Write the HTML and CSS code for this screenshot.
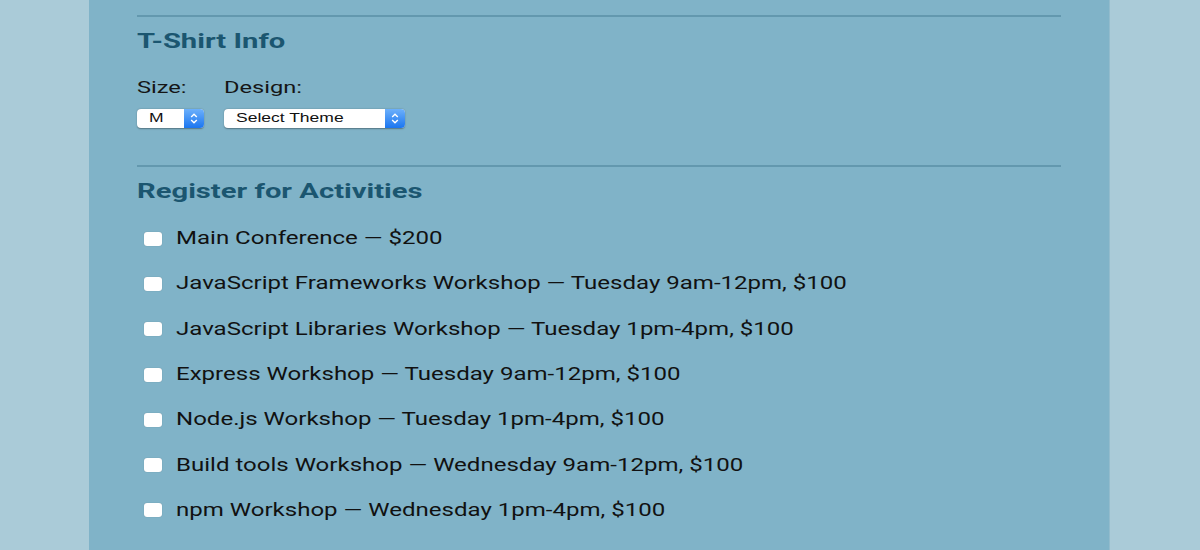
FILE: index.html
```html
<!DOCTYPE html>
<html>
<head>
<meta charset="utf-8">
<link rel="stylesheet" href="styles.css">
</head>
<body>
<div class="panel">
  <div class="inner">
    <hr class="rule">
    <h2 class="heading"><span class="wide">T-Shirt Info</span></h2>
    <div class="shirt-row">
      <div class="field">
        <span class="label"><span class="wide">Size:</span></span>
        <div class="select select-size"><span class="select-text"><span class="wide">M</span></span><span class="select-btn"><svg width="8" height="11" viewBox="0 0 8 11"><path d="M1.2 4 L4 1.3 L6.8 4 M1.2 7 L4 9.7 L6.8 7" fill="none" stroke="#fff" stroke-width="1.4"/></svg></span></div>
      </div>
      <div class="field">
        <span class="label"><span class="wide">Design:</span></span>
        <div class="select select-design"><span class="select-text"><span class="wide">Select Theme</span></span><span class="select-btn"><svg width="8" height="11" viewBox="0 0 8 11"><path d="M1.2 4 L4 1.3 L6.8 4 M1.2 7 L4 9.7 L6.8 7" fill="none" stroke="#fff" stroke-width="1.4"/></svg></span></div>
      </div>
    </div>
    <hr class="rule rule-2">
    <h2 class="heading"><span class="wide">Register for Activities</span></h2>
    <ul class="activities">
      <li><span class="box"></span><span class="wide">Main Conference — $200</span></li>
      <li><span class="box"></span><span class="wide">JavaScript Frameworks Workshop — Tuesday 9am-12pm, $100</span></li>
      <li><span class="box"></span><span class="wide">JavaScript Libraries Workshop — Tuesday 1pm-4pm, $100</span></li>
      <li><span class="box"></span><span class="wide">Express Workshop — Tuesday 9am-12pm, $100</span></li>
      <li><span class="box"></span><span class="wide">Node.js Workshop — Tuesday 1pm-4pm, $100</span></li>
      <li><span class="box"></span><span class="wide">Build tools Workshop — Wednesday 9am-12pm, $100</span></li>
      <li><span class="box"></span><span class="wide">npm Workshop — Wednesday 1pm-4pm, $100</span></li>
    </ul>
  </div>
</div>
</body>
</html>
```
FILE: styles.css
```css
html, body {
  margin: 0;
  padding: 0;
  height: 100%;
}
body {
  background: #aacbd8;
  font-family: Roboto, "Liberation Sans", sans-serif;
  color: #111;
  overflow: hidden;
}
.panel {
  width: 1021px;
  margin-left: 89px;
  height: 550px;
  background: #80b3c8;
  border-right: 1px solid #93bccd;
  box-sizing: border-box;
}
.inner {
  padding: 15px 48px 0 48px;
}
.wide {
  display: inline-block;
  white-space: nowrap;
  transform-origin: left center;
}
.rule {
  margin: 0;
  border: 0;
  height: 2px;
  background: #6398ae;
}
.heading {
  margin: 10px 0 0 0;
  font-size: 21px;
  font-weight: 700;
  color: #1b5670;
  line-height: 28px;
}
.heading .wide { transform: scaleX(1.39); }
.shirt-row {
  display: flex;
  gap: 20px;
  margin-top: 21px;
}
.field {
  display: flex;
  flex-direction: column;
}
.label {
  font-size: 17px;
  line-height: 22px;
  color: #151515;
}
.label .wide { transform: scaleX(1.39); }
.select {
  margin-top: 11px;
  height: 19px;
  display: flex;
  background: #fff;
  border-radius: 4px;
  box-shadow: 0 0.5px 1.5px rgba(0,0,0,0.35);
  overflow: hidden;
  box-sizing: border-box;
}
.select-size { width: 67px; }
.select-design { width: 181px; }
.select-text {
  flex: 1;
  font-family: "Liberation Sans", Arial, sans-serif;
  font-size: 12.5px;
  line-height: 19px;
  padding-left: 12px;
  color: #111;
}
.select-text .wide { transform: scaleX(1.4); }
.select-btn {
  width: 20px;
  background: linear-gradient(#6cb0fb, #1b76f0);
  display: flex;
  align-items: center;
  justify-content: center;
}
.rule-2 {
  margin-top: 37px;
}
.activities {
  list-style: none;
  margin: 10px 0 0 0;
  padding: 0;
}
.activities li {
  display: flex;
  align-items: center;
  height: 45.3px;
  font-size: 18px;
  color: #111;
}
.activities .wide { transform: scaleX(1.335); }
.box {
  width: 18px;
  height: 14px;
  background: #fff;
  border-radius: 3px;
  margin: 2px 14px 0 7px;
  box-shadow: 0 0 1px rgba(0,0,0,0.3);
}
```
